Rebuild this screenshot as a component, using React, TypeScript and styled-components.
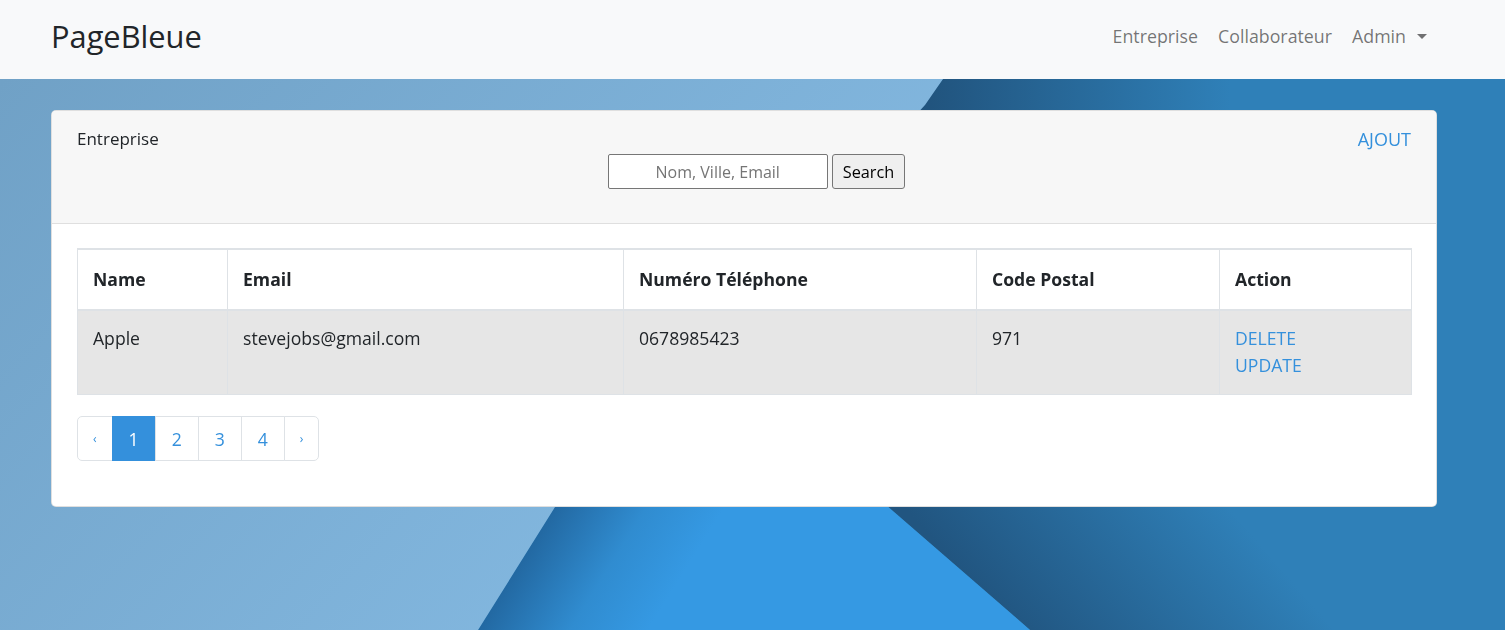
import React from "react";
import styled, { createGlobalStyle } from "styled-components";

const Global = createGlobalStyle`
  html, body { margin: 0; padding: 0; }
  body {
    font-family: "Open Sans", "Noto Sans", sans-serif;
    color: #212529;
    background: #2f80b8;
    min-height: 630px;
  }
  * { box-sizing: border-box; }
`;

const Backdrop = styled.svg`
  position: fixed;
  inset: 0;
  width: 100%;
  height: 100%;
  z-index: 0;
`;

const Page = styled.div`
  position: relative;
  z-index: 1;
  min-height: 630px;
`;

const Navbar = styled.nav`
  height: 79px;
  background: #f8f9fa;
  display: flex;
  align-items: center;
  justify-content: space-between;
  padding: 0 68px 7px 51px;
`;

const Brand = styled.a`
  font-size: 30.8px;
  color: #212529;
  text-decoration: none;
  line-height: 1;
`;

const NavList = styled.ul`
  list-style: none;
  margin: 0;
  padding: 0;
  display: flex;
`;

const NavLink = styled.a`
  display: flex;
  align-items: center;
  padding: 8px 10px;
  font-size: 17.8px;
  color: rgba(0, 0, 0, 0.55);
  text-decoration: none;
`;

const Caret = styled.span`
  display: inline-block;
  margin-left: 11px;
  border-top: 5.4px solid currentColor;
  border-left: 5.4px solid transparent;
  border-right: 5.4px solid transparent;
`;

const Main = styled.main`
  padding: 31px 68px 30px 51px;
`;

const Card = styled.section`
  background: #fff;
  border: 1px solid rgba(0, 0, 0, 0.125);
  border-radius: 5px;
  overflow: hidden;
`;

const CardHeader = styled.header`
  background: #f7f7f7;
  border-bottom: 1px solid #dfdfdf;
  padding: 16px 25px 34px;
`;

const HeaderRow = styled.div`
  display: flex;
  justify-content: space-between;
  align-items: center;
  line-height: 24px;
`;

const Title = styled.span`
  font-size: 17px;
  color: #212529;
`;

const AddLink = styled.a`
  font-size: 18px;
  color: #3490dc;
  text-decoration: none;
`;

const SearchForm = styled.form`
  display: flex;
  justify-content: center;
  gap: 4px;
  margin-top: 3px;
  padding-left: 25px;
`;

const SearchInput = styled.input`
  width: 220px;
  height: 35px;
  border: 1px solid #767676;
  border-radius: 2px;
  background: #fff;
  text-align: center;
  font-family: inherit;
  font-size: 16px;
  color: #212529;
  outline: none;
  &::placeholder { color: #757575; }
`;

const SearchButton = styled.button`
  height: 35px;
  padding: 0 10px;
  border: 1px solid #767676;
  border-radius: 3px;
  background: #efefef;
  font-family: inherit;
  font-size: 16.3px;
  color: #000;
`;

const CardBody = styled.div`
  padding: 24px 25px 45px;
`;

const Table = styled.table`
  width: 100%;
  border-collapse: collapse;
  table-layout: fixed;
  font-size: 17.6px;
  line-height: 27px;
  border: 1px solid #dee2e6;
  border-top-width: 2px;
`;

const Th = styled.th<{ $w: number }>`
  width: ${(p) => p.$w}px;
  text-align: left;
  font-weight: 700;
  padding: 16px 15px;
  background: #fff;
  border: 1px solid #dee2e6;
  border-bottom-width: 2px;
  color: #212529;
`;

const Row = styled.tr`
  background: #e6e6e6;
`;

const Td = styled.td`
  vertical-align: top;
  padding: 14px 15px 15px;
  border: 1px solid #dee2e6;
  color: #212529;
`;

const ActionLink = styled.a`
  display: block;
  color: #3490dc;
  text-decoration: none;
`;

const Pager = styled.ul`
  list-style: none;
  display: inline-flex;
  margin: 21px 0 0;
  padding: 0;
  border-radius: 5px;
`;

const PageItem = styled.li<{ $active?: boolean; $arrow?: boolean }>`
  height: 45px;
  display: flex;
  align-items: center;
  justify-content: center;
  padding: 0 ${(p) => (p.$arrow ? 15 : 16)}px;
  font-size: ${(p) => (p.$arrow ? 12 : 17.6)}px;
  color: ${(p) => (p.$active ? "#fff" : "#3490dc")};
  background: ${(p) => (p.$active ? "#3490dc" : "#fff")};
  border: 1px solid ${(p) => (p.$active ? "#3490dc" : "#dee2e6")};
  margin-left: -1px;
  &:first-child {
    margin-left: 0;
    border-radius: 5px 0 0 5px;
  }
  &:last-child {
    border-radius: 0 5px 5px 0;
  }
`;

const columns = [
  { label: "Name", w: 150 },
  { label: "Email", w: 396 },
  { label: "Numéro Téléphone", w: 353 },
  { label: "Code Postal", w: 243 },
  { label: "Action", w: 192 },
];

function Background() {
  return (
    <Backdrop viewBox="0 0 1505 630" preserveAspectRatio="none">
      <defs>
        <linearGradient id="lightG" gradientUnits="userSpaceOnUse" x1="0" y1="79" x2="600" y2="630">
          <stop offset="0" stopColor="#70a1c6" />
          <stop offset="1" stopColor="#83b8e0" />
        </linearGradient>
        <linearGradient id="topDarkG" gradientUnits="userSpaceOnUse" x1="930" y1="0" x2="1230" y2="0">
          <stop offset="0" stopColor="#21547e" />
          <stop offset="1" stopColor="#2f80b8" />
        </linearGradient>
        <linearGradient id="brightG" gradientUnits="userSpaceOnUse" x1="515" y1="565" x2="640" y2="643">
          <stop offset="0" stopColor="#2267a0" />
          <stop offset="0.55" stopColor="#308cd0" />
          <stop offset="1" stopColor="#3599e3" />
        </linearGradient>
        <linearGradient id="rightDarkG" gradientUnits="userSpaceOnUse" x1="955" y1="565" x2="1140" y2="405">
          <stop offset="0" stopColor="#215580" />
          <stop offset="1" stopColor="#2f80b8" />
        </linearGradient>
      </defs>
      <rect x="0" y="0" width="1505" height="630" fill="#2f80b8" />
      <polygon points="943,79 1505,79 1505,300 770,300" fill="url(#topDarkG)" />
      <polygon points="788,420 1505,420 1505,630 1030,630" fill="url(#rightDarkG)" />
      <polygon points="609,420 788,420 1030,630 478,630" fill="url(#brightG)" />
      <polygon points="0,0 943,0 943,79 925,105 555,507 478,630 0,630" fill="url(#lightG)" />
    </Backdrop>
  );
}

export default function App() {
  return (
    <>
      <Global />
      <Background />
      <Page>
        <Navbar>
          <Brand href="#">PageBleue</Brand>
          <NavList>
            <li>
              <NavLink href="#">Entreprise</NavLink>
            </li>
            <li>
              <NavLink href="#">Collaborateur</NavLink>
            </li>
            <li>
              <NavLink href="#">
                Admin
                <Caret />
              </NavLink>
            </li>
          </NavList>
        </Navbar>
        <Main>
          <Card>
            <CardHeader>
              <HeaderRow>
                <Title>Entreprise</Title>
                <AddLink href="#">AJOUT</AddLink>
              </HeaderRow>
              <SearchForm onSubmit={(e) => e.preventDefault()}>
                <SearchInput placeholder="Nom, Ville, Email" />
                <SearchButton type="submit">Search</SearchButton>
              </SearchForm>
            </CardHeader>
            <CardBody>
              <Table>
                <thead>
                  <tr>
                    {columns.map((c) => (
                      <Th key={c.label} $w={c.w}>
                        {c.label}
                      </Th>
                    ))}
                  </tr>
                </thead>
                <tbody>
                  <Row>
                    <Td>Apple</Td>
                    <Td>stevejobs@gmail.com</Td>
                    <Td>0678985423</Td>
                    <Td>971</Td>
                    <Td>
                      <ActionLink href="#">DELETE</ActionLink>
                      <ActionLink href="#">UPDATE</ActionLink>
                    </Td>
                  </Row>
                </tbody>
              </Table>
              <Pager>
                <PageItem $arrow>‹</PageItem>
                <PageItem $active>1</PageItem>
                <PageItem>2</PageItem>
                <PageItem>3</PageItem>
                <PageItem>4</PageItem>
                <PageItem $arrow>›</PageItem>
              </Pager>
            </CardBody>
          </Card>
        </Main>
      </Page>
    </>
  );
}
